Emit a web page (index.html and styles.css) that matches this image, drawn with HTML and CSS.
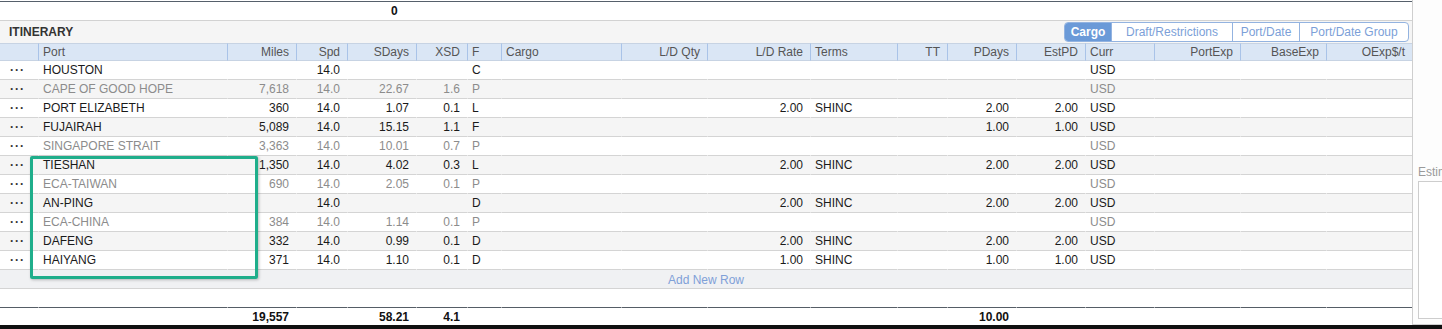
FILE: index.html
```html
<!DOCTYPE html>
<html lang="en">
<head>
	<meta charset="UTF-8">
	<title>Itinerary</title>
	<link rel="stylesheet" href="styles.css">
</head>
<body>
	<div class="page">
		<div class="main">
			<div class="sumbar">0</div>
			<div class="section-head">
				<span class="section-title">ITINERARY</span>
				<div class="tabs">
					<span class="tab tab-cargo active">Cargo</span>
					<span class="tab tab-draft">Draft/Restrictions</span>
					<span class="tab tab-pd">Port/Date</span>
					<span class="tab tab-pdg">Port/Date Group</span>
				</div>
			</div>
			<table class="grid">
				<colgroup>
					<col class="w38">
					<col class="w189">
					<col class="w69">
					<col class="w51">
					<col class="w69">
					<col class="w51">
					<col class="w34">
					<col class="w120">
					<col class="w86">
					<col class="w103">
					<col class="w87">
					<col class="w50">
					<col class="w69">
					<col class="w69">
					<col class="w69">
					<col class="w86">
					<col class="w86">
					<col class="w86">
				</colgroup>
				<thead>
					<tr>
						<th></th><th>Port</th><th>Miles</th><th>Spd</th><th>SDays</th><th>XSD</th><th>F</th><th>Cargo</th><th>L/D Qty</th><th>L/D Rate</th><th>Terms</th><th>TT</th><th>PDays</th><th>EstPD</th><th>Curr</th><th>PortExp</th><th>BaseExp</th><th>OExp$/t</th>
					</tr>
				</thead>
				<tbody>
					<tr>
						<td>···</td><td>HOUSTON</td><td></td><td>14.0</td><td></td><td></td><td>C</td><td></td><td></td><td></td><td></td><td></td><td></td><td></td><td>USD</td><td></td><td></td><td></td>
					</tr>
					<tr class="alt muted">
						<td>···</td><td>CAPE OF GOOD HOPE</td><td>7,618</td><td>14.0</td><td>22.67</td><td>1.6</td><td>P</td><td></td><td></td><td></td><td></td><td></td><td></td><td></td><td>USD</td><td></td><td></td><td></td>
					</tr>
					<tr>
						<td>···</td><td>PORT ELIZABETH</td><td>360</td><td>14.0</td><td>1.07</td><td>0.1</td><td>L</td><td></td><td></td><td>2.00</td><td>SHINC</td><td></td><td>2.00</td><td>2.00</td><td>USD</td><td></td><td></td><td></td>
					</tr>
					<tr class="alt">
						<td>···</td><td>FUJAIRAH</td><td>5,089</td><td>14.0</td><td>15.15</td><td>1.1</td><td>F</td><td></td><td></td><td></td><td></td><td></td><td>1.00</td><td>1.00</td><td>USD</td><td></td><td></td><td></td>
					</tr>
					<tr class="muted">
						<td>···</td><td>SINGAPORE STRAIT</td><td>3,363</td><td>14.0</td><td>10.01</td><td>0.7</td><td>P</td><td></td><td></td><td></td><td></td><td></td><td></td><td></td><td>USD</td><td></td><td></td><td></td>
					</tr>
					<tr class="alt">
						<td>···</td><td>TIESHAN</td><td>1,350</td><td>14.0</td><td>4.02</td><td>0.3</td><td>L</td><td></td><td></td><td>2.00</td><td>SHINC</td><td></td><td>2.00</td><td>2.00</td><td>USD</td><td></td><td></td><td></td>
					</tr>
					<tr class="muted">
						<td>···</td><td>ECA-TAIWAN</td><td>690</td><td>14.0</td><td>2.05</td><td>0.1</td><td>P</td><td></td><td></td><td></td><td></td><td></td><td></td><td></td><td>USD</td><td></td><td></td><td></td>
					</tr>
					<tr class="alt">
						<td>···</td><td>AN-PING</td><td></td><td>14.0</td><td></td><td></td><td>D</td><td></td><td></td><td>2.00</td><td>SHINC</td><td></td><td>2.00</td><td>2.00</td><td>USD</td><td></td><td></td><td></td>
					</tr>
					<tr class="muted">
						<td>···</td><td>ECA-CHINA</td><td>384</td><td>14.0</td><td>1.14</td><td>0.1</td><td>P</td><td></td><td></td><td></td><td></td><td></td><td></td><td></td><td>USD</td><td></td><td></td><td></td>
					</tr>
					<tr class="alt">
						<td>···</td><td>DAFENG</td><td>332</td><td>14.0</td><td>0.99</td><td>0.1</td><td>D</td><td></td><td></td><td>2.00</td><td>SHINC</td><td></td><td>2.00</td><td>2.00</td><td>USD</td><td></td><td></td><td></td>
					</tr>
					<tr>
						<td>···</td><td>HAIYANG</td><td>371</td><td>14.0</td><td>1.10</td><td>0.1</td><td>D</td><td></td><td></td><td>1.00</td><td>SHINC</td><td></td><td>1.00</td><td>1.00</td><td>USD</td><td></td><td></td><td></td>
					</tr>
					<tr class="add-row">
						<td colspan="18">Add New Row</td>
					</tr>
					<tr class="blank">
						<td colspan="18"></td>
					</tr>
				</tbody>
				<tfoot>
					<tr>
						<td></td><td></td><td>19,557</td><td></td><td>58.21</td><td>4.1</td><td></td><td></td><td></td><td></td><td></td><td></td><td>10.00</td><td></td><td></td><td></td><td></td><td></td>
					</tr>
				</tfoot>
			</table>
			<div class="highlight"></div>
		</div>
		<div class="side">
			<div class="side-label">Estimate Notes</div>
			<div class="notes"></div>
		</div>
	</div>
</body>
</html>
```

FILE: styles.css
```css
*{
	margin: 0;
	padding: 0;
	box-sizing: border-box;
}
html,body{
	background: #101010;
	font-family: "Liberation Sans", Arial, sans-serif;
	font-size: 12px;
	color: #1a1a1a;
}
.page{
	display: flex;
	height: 325px;
	background: #fdfdfd;
}
.main{
	position: relative;
	width: 1413px;
	flex: none;
	border-right: 1px solid #cfcfcf;
	background: #fff;
}
/* summary line above the grid */
.sumbar{
	margin-top: 1px;
	height: 20px;
	border-top: 1px solid #56606b;
	border-bottom: 1px solid #d2d2d2;
	line-height: 18px;
	padding-left: 391px;
	font-weight: 700;
	color: #111;
}
.section-head{
	display: flex;
	align-items: center;
	justify-content: space-between;
	height: 22px;
	padding: 0 3px 0 9px;
	background: #f5f5f5;
}
.section-title{
	font-weight: 700;
	color: #333;
}
.tabs{
	display: flex;
	height: 20px;
	border: 1px solid #93b3e0;
	border-radius: 4px;
	overflow: hidden;
	background: #fff;
}
.tab{
	line-height: 18px;
	text-align: center;
	color: #7c9fd8;
	border-left: 1px solid #93b3e0;
	cursor: pointer;
}
.tab.active{
	background: #6b9ad8;
	color: #fff;
	font-weight: 700;
}
.tab-cargo{ width: 46px; border-left: 0; }
.tab-draft{ width: 121px; }
.tab-pd{ width: 67px; }
.tab-pdg{ width: 109px; }

/* itinerary grid */
.grid{
	width: 1412px;
	table-layout: fixed;
	border-collapse: separate;
	border-spacing: 0;
}
.w34{ width: 34px; }
.w38{ width: 38px; }
.w50{ width: 50px; }
.w51{ width: 51px; }
.w69{ width: 69px; }
.w86{ width: 86px; }
.w87{ width: 87px; }
.w103{ width: 103px; }
.w120{ width: 120px; }
.w189{ width: 189px; }
.grid th,
.grid td{
	padding: 0 7px 0 4px;
	border-left: 1px solid transparent;
	white-space: nowrap;
	overflow: hidden;
	text-align: right;
	font-weight: normal;
}
.grid th:nth-child(2),.grid td:nth-child(2),
.grid th:nth-child(7),.grid td:nth-child(7),
.grid th:nth-child(8),.grid td:nth-child(8),
.grid th:nth-child(11),.grid td:nth-child(11),
.grid th:nth-child(15),.grid td:nth-child(15){
	text-align: left;
}
.grid th:first-child,
.grid td:first-child{
	border-left: 0;
}
.grid th{
	line-height: 16px;
	color: #555;
	background: #dae6f5;
	border-top: 1px solid #c7d3e3;
	border-bottom: 1px solid #c7d3e3;
	border-left-color: #a9c3e8;
}
.grid td{
	line-height: 17px;
	padding-top: 1px;
	border-bottom: 1px solid #d4d4d4;
}
.grid tbody td:first-child{
	padding-left: 10px;
	text-align: left;
	font-weight: 700;
	letter-spacing: 1px;
	color: #333;
}
.grid tr.alt td{
	background: #f5f5f5;
}
.grid tr.muted td{
	color: #8c8c8c;
}
.grid tr.muted td:first-child{
	color: #333;
}
.grid tr.add-row td{
	padding: 2px 0 0;
	line-height: 16px;
	text-align: center;
	font-weight: normal;
	letter-spacing: 0;
	color: #7fa0d8;
	background: #f0f1f3;
	cursor: pointer;
}
.grid tr.blank td{
	height: 18px;
	padding: 0;
	border-bottom: 0;
}
.grid tfoot td{
	line-height: 16px;
	padding-top: 1px;
	border-bottom: 0;
	border-top: 1px solid #555d66;
	font-weight: 700;
	color: #111;
}

/* annotation frame drawn over the port column */
.highlight{
	position: absolute;
	left: 30px;
	top: 156px;
	width: 228px;
	height: 123px;
	border: 3px solid #1fae8b;
	border-radius: 2px;
	box-shadow: 1px 1px 3px rgba(0,0,0,0.25);
	pointer-events: none;
}

.side{
	flex: 1;
	overflow: hidden;
	padding: 165px 0 0 5px;
	border-bottom: 1px solid #d0d0d0;
	background: #fdfdfd;
}
.side-label{
	line-height: 14px;
	color: #9a9a9a;
	white-space: nowrap;
}
.notes{
	margin-top: 2px;
	width: 60px;
	height: 138px;
	border: 1px solid #cdcdcd;
	background: #fff;
}
```
